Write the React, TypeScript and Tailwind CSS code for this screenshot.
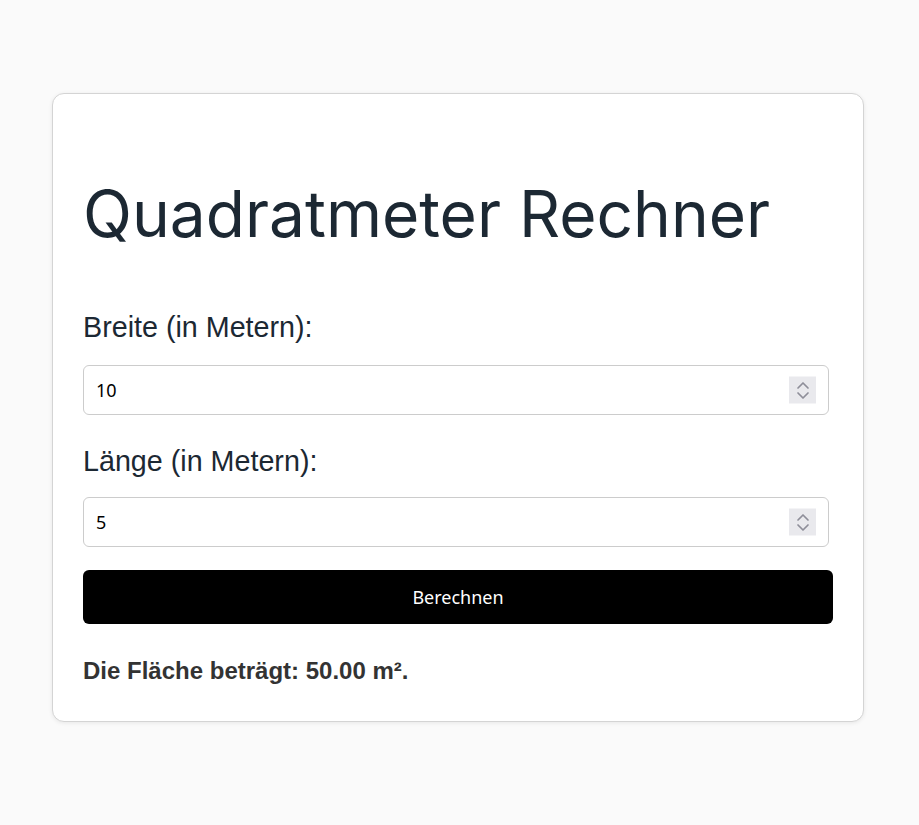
import { useState } from 'react'

function Spinner({ onUp, onDown }: { onUp: () => void; onDown: () => void }) {
  return (
    <div className="absolute right-[13px] top-1/2 flex h-[27px] w-[27px] -translate-y-1/2 flex-col items-center justify-center bg-[#e9e9ed]">
      <button onClick={onUp} className="flex h-[12px] w-full items-end justify-center pb-[1px]">
        <svg width="14" height="8" viewBox="0 0 14 8" fill="none" stroke="#8e8e99" strokeWidth="1.7" strokeLinecap="round" strokeLinejoin="round">
          <path d="M2 6.5 7 1.5 12 6.5" />
        </svg>
      </button>
      <button onClick={onDown} className="flex h-[12px] w-full items-start justify-center pt-[1px]">
        <svg width="14" height="8" viewBox="0 0 14 8" fill="none" stroke="#8e8e99" strokeWidth="1.7" strokeLinecap="round" strokeLinejoin="round">
          <path d="M2 1.5 7 6.5 12 1.5" />
        </svg>
      </button>
    </div>
  )
}

function NumberField({ value, setValue }: { value: string; setValue: (v: string) => void }) {
  const step = (d: number) => setValue(String((parseFloat(value) || 0) + d))
  return (
    <div className="relative w-[746px]">
      <input
        type="text"
        inputMode="decimal"
        value={value}
        onChange={(e) => setValue(e.target.value)}
        className="h-[50px] w-full rounded-md border border-[#cccccc] bg-white pl-3 pr-12 font-['Noto_Sans',sans-serif] text-[18px] text-black outline-none"
      />
      <Spinner onUp={() => step(1)} onDown={() => step(-1)} />
    </div>
  )
}

export default function App() {
  const [breite, setBreite] = useState('10')
  const [laenge, setLaenge] = useState('5')
  const [flaeche, setFlaeche] = useState((10 * 5).toFixed(2))

  // Fläche aus Breite und Länge berechnen
  const berechnen = () => {
    const b = parseFloat(breite)
    const l = parseFloat(laenge)
    if (!isNaN(b) && !isNaN(l)) setFlaeche((b * l).toFixed(2))
  }

  return (
    <div className="min-h-screen bg-[#fafafa] pt-[93px]">
      <div className="ml-[52px] w-[812px] rounded-xl border border-[#d4d4d4] bg-white px-[30px] pb-[38px] pt-[85px] shadow-[0_1px_4px_rgba(0,0,0,0.08)]">
        <h1 className="font-['Inter',sans-serif] text-[64px] font-normal leading-[1.1] text-[#1c2833]">
          Quadratmeter Rechner
        </h1>

        <label className="mt-[64px] block font-['Liberation_Sans',Arial,sans-serif] text-[28.7px] leading-[29px] text-[#1c2833]">
          Breite (in Metern):
        </label>
        <div className="mt-[23px]">
          <NumberField value={breite} setValue={setBreite} />
        </div>

        <label className="mt-[32px] block font-['Liberation_Sans',Arial,sans-serif] text-[28.7px] leading-[29px] text-[#1c2833]">
          Länge (in Metern):
        </label>
        <div className="mt-[21px]">
          <NumberField value={laenge} setValue={setLaenge} />
        </div>

        <button
          onClick={berechnen}
          className="mt-[23px] block h-[54px] w-[750px] rounded-md bg-black font-['Noto_Sans',sans-serif] text-[18px] text-white"
        >
          Berechnen
        </button>

        <p className="mt-[35px] font-['Liberation_Sans',Arial,sans-serif] text-[24px] font-bold leading-none text-[#333333]">
          Die Fläche beträgt: {flaeche} m².
        </p>
      </div>
    </div>
  )
}
